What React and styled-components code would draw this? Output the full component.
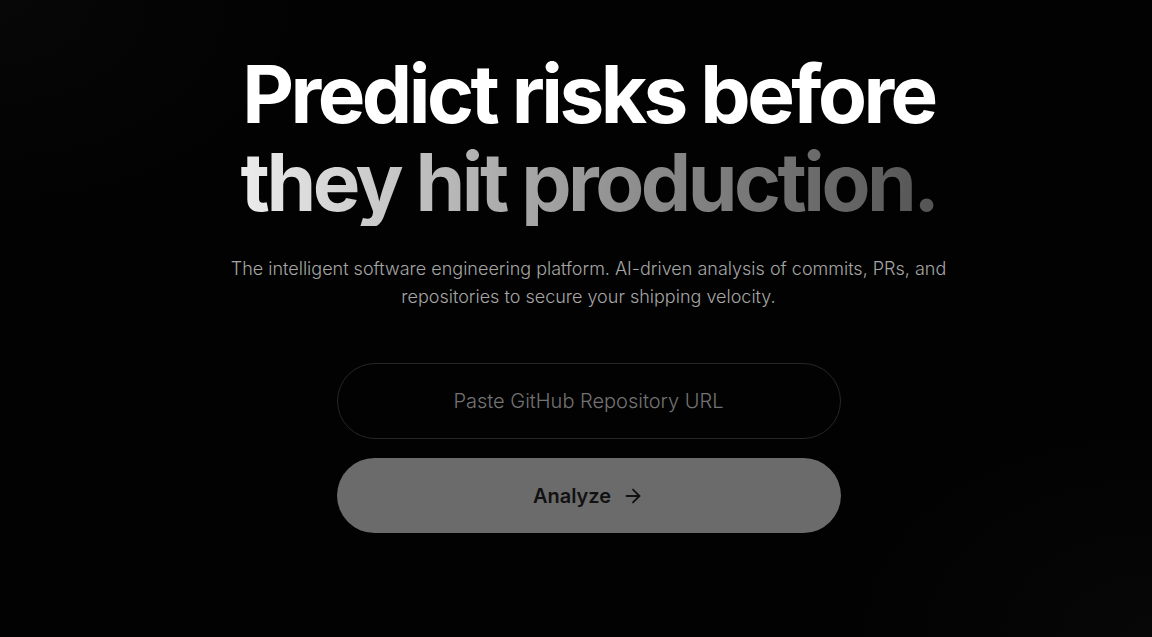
import React from "react";
import styled, { createGlobalStyle } from "styled-components";
import { ArrowRight } from "lucide-react";

const GlobalStyle = createGlobalStyle`
  * {
    box-sizing: border-box;
  }
  html, body {
    margin: 0;
    padding: 0;
    background: #000;
  }
  body {
    font-family: Inter, "Noto Sans", sans-serif;
    -webkit-font-smoothing: antialiased;
  }
`;

const Page = styled.main`
  min-height: 100vh;
  display: flex;
  flex-direction: column;
  align-items: center;
  padding: 50px 0 0 25px;
  background:
    radial-gradient(ellipse 40% 50% at 100% 100%, rgba(255, 255, 255, 0.018), transparent 70%),
    radial-gradient(ellipse 40% 50% at 0% 0%, rgba(255, 255, 255, 0.02), transparent 70%),
    #020202;
  color: #fff;
`;

const Headline = styled.h1`
  margin: 0;
  font-size: 80px;
  line-height: 88px;
  font-weight: 700;
  letter-spacing: -0.044em;
  text-align: center;
`;

const Line = styled.span`
  display: block;
`;

/* second line fades from near-white into dark grey */
const FadeLine = styled(Line)`
  background: linear-gradient(to right, #ececec 0%, #b8b8b8 30%, #8c8c8c 58%, #545454 100%);
  -webkit-background-clip: text;
  background-clip: text;
  color: transparent;
  width: fit-content;
  margin: 0 auto;
`;

const Lead = styled.p`
  margin: 29px 0 0;
  max-width: 730px;
  font-size: 18px;
  font-weight: 300;
  line-height: 28px;
  color: #a6a6a6;
  text-align: center;
`;

const Form = styled.form`
  width: 504px;
  margin-top: 52px;
  display: flex;
  flex-direction: column;
  gap: 19px;
`;

const UrlInput = styled.input`
  height: 76px;
  width: 100%;
  border-radius: 999px;
  border: 1px solid #262626;
  background: transparent;
  color: #fff;
  font-family: inherit;
  font-size: 20px;
  font-weight: 300;
  text-align: center;
  outline: none;

  &::placeholder {
    color: #737373;
  }
`;

const AnalyzeButton = styled.button`
  height: 75px;
  width: 100%;
  border: none;
  border-radius: 999px;
  background: #6b6b6b;
  color: #111;
  font-family: inherit;
  font-size: 20px;
  font-weight: 600;
  display: flex;
  align-items: center;
  justify-content: center;
  gap: 11px;
  cursor: not-allowed;
`;

export default function App() {
  return (
    <>
      <GlobalStyle />
      <Page>
        <Headline>
          <Line>Predict risks before</Line>
          <FadeLine>they hit production.</FadeLine>
        </Headline>
        <Lead>
          The intelligent software engineering platform. AI-driven analysis of
          commits, PRs, and repositories to secure your shipping velocity.
        </Lead>
        <Form onSubmit={(e) => e.preventDefault()}>
          <UrlInput type="text" placeholder="Paste GitHub Repository URL" />
          <AnalyzeButton type="submit" disabled>
            Analyze
            <ArrowRight size={22} strokeWidth={2} />
          </AnalyzeButton>
        </Form>
      </Page>
    </>
  );
}
